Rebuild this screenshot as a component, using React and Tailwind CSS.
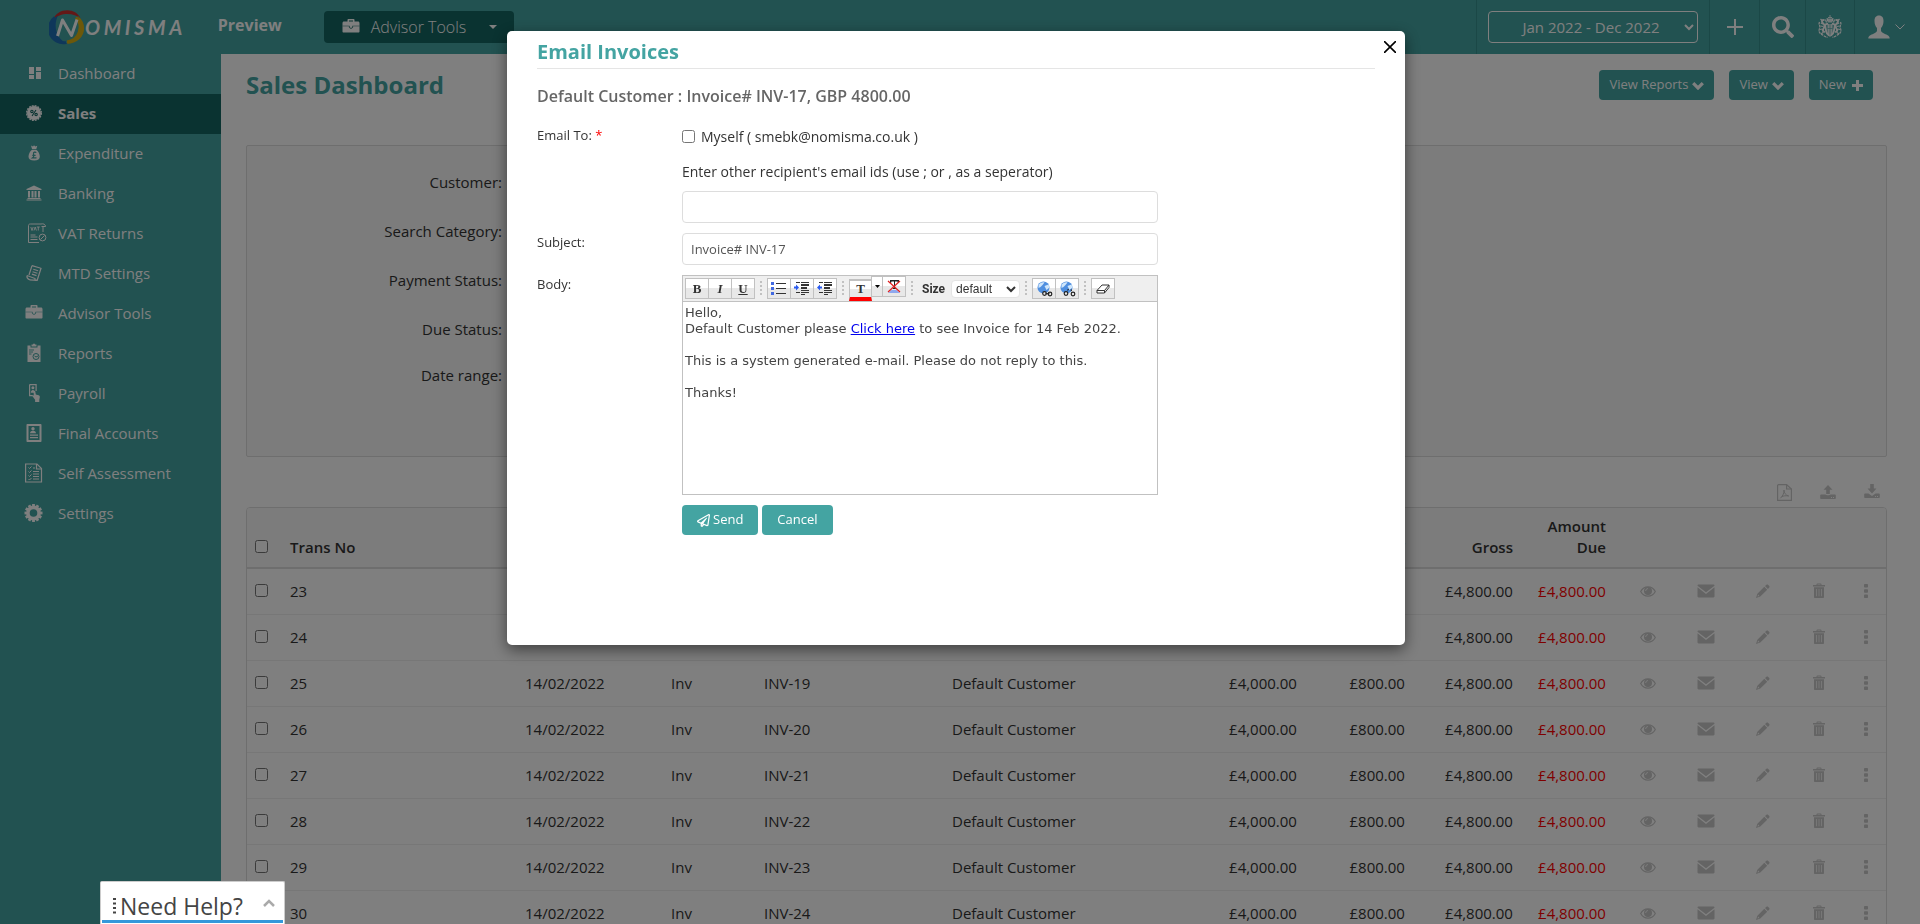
import React from "react";
import { FaSearch, FaRegPaperPlane } from "react-icons/fa";

/* ---------- icons ---------- */

const Icon = ({ box = "0 0 20 20", className = "size-5", children }) => (
  <svg viewBox={box} className={className} fill="currentColor" aria-hidden="true">
    {children}
  </svg>
);

const DashboardIcon = () => (
  <Icon>
    <path d="M5 4h5v7H5zM12 4h5v4h-5zM5 12h5v4H5zM12 9h5v7h-5z" />
  </Icon>
);

const SalesIcon = () => (
  <Icon>
    <circle cx="10" cy="10" r="7" />
    <circle cx="10" cy="10" r="7.3" fill="none" stroke="currentColor" strokeWidth="1.4" strokeDasharray="1.9 1" />
    <g fill="none" stroke="#146662" strokeWidth="1.1">
      <circle cx="7.9" cy="8.4" r="1.2" />
      <circle cx="12.1" cy="11.6" r="1.2" />
      <path d="M12 7l-4 6" />
    </g>
  </Icon>
);

const ExpenditureIcon = () => (
  <Icon>
    <path d="M7 2.5l2 1 1-1.3 1.3 1.2 2-.6L12.300 6H8z" />
    <path d="M8 6.700h4.300c2 1.500 3.500 4.300 3.500 6.800 0 2.700-1.800 4-5.600 4s-5.700-1.300-5.700-4c0-2.500 1.500-5.300 3.500-6.800z" />
    <path d="M12.200 9.800c-.8-1.300-3-.9-2.700 1.100l.3 1.600c.1 1-.3 1.700-1.200 2.300h3.900M8.300 12.300h3.300" fill="none" stroke="#44a4a2" strokeWidth="1.200" />
  </Icon>
);

const BankIcon = () => (
  <Icon>
    <path d="M10 2.500L17.500 6v1h-15V6zM4 8h2v6.500H4zM7.500 8h2v6.500h-2zM10.500 8h2v6.500h-2zM14 8h2v6.500h-2zM3.500 15h13v1h-13zM2.500 16.500h15v1h-15z" />
  </Icon>
);

const VatIcon = () => (
  <Icon box="-3 0 20 20" className="size-5 overflow-visible">
    <g fill="none" stroke="currentColor" strokeWidth="1">
      <path d="M16 9V3.500M14 1H3.500c-1.500 0-2 .6-2 1.500v17H12M14 1c2.500-.6 4.500.3 4.500 2.500h-4" />
      <circle cx="15.500" cy="14.500" r="3.400" />
      <path d="M13.500 16.500l4-4M3.500 12h5M3.500 14h7M3.500 16.500h7" />
      <path d="M3.800 4L5 7.500 6.200 4M7 7.500L8.200 4l1.200 3.500M9.800 4h3M11.300 4v3.500" strokeWidth=".9" />
    </g>
  </Icon>
);

const MtdIcon = () => (
  <Icon>
    <g fill="none" stroke="currentColor" strokeWidth="1.200">
      <path d="M8 2.600l9 2.700-3.800 12-7.600-.4" />
      <path d="M8 2.600L5 12M3 12.500l8 3c-.5 1.500.5 2.200 2 1.800M3 12.500c-.4 2 .6 3.500 3 4.300" />
      <path d="M9.300 6.300l4.800 1.500M8.600 8.700l4.800 1.500M7.900 11.100l4.600 1.500" />
    </g>
  </Icon>
);

const BriefcaseIcon = ({ className, seam = "#44a4a2" }) => (
  <Icon className={className}>
    <path
      d="M6.500 4.500V3c0-.6.400-1 1-1h5c.6 0 1 .4 1 1v1.500H17c.9 0 1.500.6 1.500 1.500v8.500c0 .6-.4 1-1 1h-15c-.6 0-1-.4-1-1V6c0-.9.600-1.500 1.500-1.500zM8 4.500h4v-1H8z"
      fillRule="evenodd"
    />
    <path d="M1.500 9h6.300M12.200 9h6.300" stroke={seam} strokeWidth=".5" />
    <path d="M8.300 8.800v1.400c0 1.500 3.400 1.500 3.400 0V8.800" fill="none" stroke={seam} strokeWidth=".8" />
  </Icon>
);

const ReportsIcon = () => (
  <Icon>
    <path d="M3.500 2.500h3v2h7v-2h3V19h-13z" />
    <path d="M7.500 1.500H9V.7h2v.8h1.500v2h-5z" />
    <path d="M5 7h5M5 9h4M5 11h2.500" stroke="#44a4a2" strokeWidth=".9" />
    <circle cx="12" cy="13.500" r="3" fill="none" stroke="#44a4a2" strokeWidth="1" />
    <path d="M10.500 13l1.500 1 2-1" fill="none" stroke="#44a4a2" strokeWidth="1" />
  </Icon>
);

const PayrollIcon = () => (
  <Icon>
    <path d="M5.600 1.600h6.500v6.500M5.600 1.600v11h3.200" fill="none" stroke="currentColor" strokeWidth="1.200" />
    <circle cx="8.900" cy="4.800" r="1.500" />
    <path d="M6.800 9.800c0-3.600 4.200-3.600 4.200 0z" />
    <path d="M9.600 8.500c0-1 1.500-1 1.700 0l.5 3 2.800.8c.9.300 1.300 1 1.200 1.900l-.5 2.500V19h-4.200v-2.200L8.500 13.300c-.4-.9.500-1.300 1.300-.6z" />
  </Icon>
);

const AccountsIcon = () => (
  <Icon>
    <path d="M3.500 1h13c.6 0 1 .4 1 1v16c0 .6-.4 1-1 1h-13c-.6 0-1-.4-1-1V2c0-.6.400-1 1-1zM4.500 3v14h11V3z" fillRule="evenodd" />
    <circle cx="9" cy="5.800" r="1.700" />
    <path d="M6 10.300c0-3.300 6-3.300 6 0zM6 11.500h8v1.200H6zM6 14h8v1.200H6z" />
  </Icon>
);

const AssessmentIcon = () => (
  <Icon>
    <g fill="none" stroke="currentColor" strokeWidth="1.200">
      <path d="M1.600 1H13l4.500 4.500V19H1.600z" />
      <path d="M12.500 1v5h5" />
      <path d="M4.500 4.500l1 1L7.500 3.500M4.500 8.500l1 1 2-2M4.500 12.500l1 1 2-2M4.500 16l1 1 2-2" strokeWidth="1" />
      <path d="M9 5h2M9 8.500h6M9 11h6M9 13.500h6M9 16h6" strokeWidth="1.100" />
    </g>
  </Icon>
);

const teeth = [0, 30, 60, 90, 120, 150, 180, 210, 240, 270, 300, 330];
const SettingsIcon = () => (
  <Icon>
    <circle cx="9.500" cy="10" r="5.600" fill="none" stroke="currentColor" strokeWidth="3.600" />
    {teeth.map((a) => (
      <rect key={a} x="8.100" y="1" width="2.800" height="2.600" transform={`rotate(${a} 9.5 10)`} />
    ))}
  </Icon>
);

const EyeIcon = () => (
  <Icon box="0 0 16 16" className="size-4">
    <path d="M.7 8.500C4 2.300 12 2.300 15.300 8.500 12 14.700 4 14.700.7 8.500z" fill="none" stroke="currentColor" strokeWidth="1.200" />
    <circle cx="8" cy="8" r="4" />
    <path d="M5.700 8c0-1.500.9-2.400 2.300-2.400" fill="none" stroke="#fff" strokeWidth=".9" />
  </Icon>
);

const MailIcon = () => (
  <Icon box="0 0 18 16" className="h-4 w-[18px]">
    <path d="M.5 2.700c0-.7.400-1.200 1.100-1.200h14.800c.7 0 1.100.5 1.100 1.200L9 9.300zM.5 4.200L9 10.900l8.500-6.700v9.100c0 .7-.4 1.200-1.100 1.200H1.600c-.7 0-1.100-.5-1.100-1.200z" />
  </Icon>
);

const PencilIcon = () => (
  <Icon box="0 0 14 14" className="size-[14px]">
    <path d="M10.200.9c.6-.6 1.400-.6 2 0l.9.900c.6.600.6 1.400 0 2l-1.200 1.200-2.900-2.900zM8.300 2.800l2.900 2.900-6.900 6.900L0 14l1.400-4.300zM2.100 10.600l-.6 1.900 1.900-.6z" fillRule="evenodd" />
  </Icon>
);

const TrashIcon = () => (
  <Icon box="0 0 14 16" className="h-4 w-[14px]">
    <path d="M4.500 2V1.300c0-.5.300-.8.800-.8h3.400c.5 0 .8.300.8.800V2H13v1.500H1V2zM5.500 2h3v-.6h-3z" fillRule="evenodd" />
    <path d="M2 4.200h10V14c0 .6-.4 1-1 1H3c-.6 0-1-.4-1-1zM4.300 6v7.300h.7V6zM6.650 6v7.300h.7V6zM9 6v7.300h.7V6z" fillRule="evenodd" />
  </Icon>
);

const DotsIcon = () => (
  <Icon box="0 0 4 14" className="h-[14px] w-1">
    <rect width="4" height="3.600" rx=".8" />
    <rect y="5.200" width="4" height="3.600" rx=".8" />
    <rect y="10.400" width="4" height="3.600" rx=".8" />
  </Icon>
);

const PdfIcon = () => (
  <Icon box="0 0 15 17" className="h-[17px] w-[15px]">
    <g fill="none" stroke="currentColor" strokeWidth="1.200">
      <path d="M1.600.600h8L14.400 5v11.400H.6V1.600c0-.6.400-1 1-1z" />
      <path d="M9.600.600V5h4.800" />
      <path d="M3.300 14.300c2-1.500 4.200-5.500 3.700-8.300 0 3 1.500 5 4.700 6-3-.5-5.200-.3-7.200.8" strokeWidth="1" />
    </g>
  </Icon>
);

const UploadIcon = () => (
  <Icon box="0 0 16 16" className="size-4">
    <path d="M8 1l4.500 4.700H9.800V10H6.200V5.700H3.500z" />
    <path d="M1 10.500h4.500c.3 1 4.700 1 5 0H15c.5 0 .8.300.8.800v3c0 .5-.3.800-.8.800H1c-.5 0-.8-.3-.8-.8v-3c0-.5.300-.8.800-.8zM11 13h1v1h-1zM13 13h1v1h-1z" fillRule="evenodd" />
  </Icon>
);

const DownloadIcon = () => (
  <Icon box="0 0 16 16" className="size-4">
    <path d="M8 9.500l4.500-5H9.800V0H6.200v4.500H3.500z" />
    <path d="M1 9.500h3.500L8 12l3.500-2.500H15c.5 0 .8.300.8.800v3c0 .5-.3.800-.8.800H1c-.5 0-.8-.3-.8-.8v-3c0-.5.300-.8.800-.8zM11 12h1v1h-1zM13 12h1v1h-1z" fillRule="evenodd" />
  </Icon>
);

const ThickChevron = () => (
  <svg viewBox="0 0 12 8" className="mt-0.5 h-2 w-3" fill="none" stroke="currentColor" strokeWidth="3.200" aria-hidden="true">
    <path d="M1.200 1.200L6 6l4.800-4.800" />
  </svg>
);

const ThickPlus = () => (
  <svg viewBox="0 0 11 11" className="size-[11px]" fill="none" stroke="currentColor" strokeWidth="3" aria-hidden="true">
    <path d="M5.500 0v11M0 5.500h11" />
  </svg>
);

const UserIcon = () => (
  <Icon box="0 0 22 24" className="h-6 w-[22px]">
    <path d="M11 .5c3.200 0 4.500 2.300 4.500 5.500 0 3-1 5.500-2.500 7v2.500c0 1.500 1.500 2.200 3.500 3.200 2.500 1.100 5.200 1.800 5.200 4.800H.3c0-3 2.700-3.700 5.200-4.800 2-1 3.500-1.700 3.500-3.200V13c-1.500-1.500-2.500-4-2.500-7C6.500 2.800 7.800.5 11 .5z" />
  </Icon>
);

const crestHalf = (
  <g fill="none" stroke="currentColor">
    <path d="M10 9c-2.500-.5-3 1-2.600 3l.8 4.500c.3 1.800 1 2.800 2.800 4" strokeWidth="1.800" />
    <path d="M6.500 5.500c-1.800-1.200-3 .2-2.300 1.800.4 1.200 2 1.300 2.300 3 .3 1.500-.6 3-1.500 4.200-.8 1.200.4 2 1.700 3" strokeWidth="2" />
    <path d="M4 5.500L2.500 4M5 9L2.800 8M5.300 11.500L2.500 11M4.300 14l-2.300.5M5 17.500l-2 1.500" strokeWidth="1.200" />
    <path d="M1.500 7c-1.300 2.500.8 3 .3 5.500-.4 1.700-1.300 3-.3 4.800 1 1.500 2.500 2.200 4 3.200 1.500 1 2.500 1.500 4 1.800" strokeWidth="1.300" strokeDasharray="2.500 .7" />
    <path d="M8.500 7.500l-1-3M9.700 6l-.6-3" strokeWidth="1.200" />
  </g>
);
const CrestIcon = () => (
  <Icon box="0 0 24 24" className="size-6">
    <path d="M11.500 0h1v2h1.500v1.500h-4V2h1.500zM9.500 4h5v3.500h-5zM9.500 9h5v9c0 2-1.200 3-2.500 4-1.300-1-2.500-2-2.500-4z" opacity=".85" />
    <path d="M12 9v11M9.500 13.500h5" stroke="#44a4a2" strokeWidth=".6" />
    {crestHalf}
    <g transform="matrix(-1 0 0 1 24 0)">{crestHalf}</g>
  </Icon>
);

const LogoRing = () => (
  <svg viewBox="0 0 36 36" className="size-9 shrink-0" aria-hidden="true" fill="none">
    <path d="M4 11C8 -1.500 27 -2 31.500 9.500 25 3.500 11 3 4 11z" fill="#c8302f" />
    <path d="M9 6.500C-3.500 14-1.500 34 19 35 8 31 3.500 18 9 6.500z" fill="#1f6fb5" />
    <path d="M6 8.500A14 14 0 0 0 17 33.500" stroke="#1f6fb5" strokeWidth="3" />
    <path d="M29 7C41 17 34.500 35 17.500 35 29 31 32.500 18 29 7z" fill="#d9b015" />
    <path d="M27 8.500A14.500 14.500 0 0 1 18 33" stroke="#d9b015" strokeWidth="3" />
    <path d="M8.500 27L13.500 11l9 15.500L28 10.500" stroke="#fff" strokeWidth="3" strokeLinejoin="round" />
  </svg>
);

/* ---------- shell ---------- */

const nav = [
  ["Dashboard", DashboardIcon],
  ["Sales", SalesIcon],
  ["Expenditure", ExpenditureIcon],
  ["Banking", BankIcon],
  ["VAT Returns", VatIcon],
  ["MTD Settings", MtdIcon],
  ["Advisor Tools", BriefcaseIcon],
  ["Reports", ReportsIcon],
  ["Payroll", PayrollIcon],
  ["Final Accounts", AccountsIcon],
  ["Self Assessment", AssessmentIcon],
  ["Settings", SettingsIcon],
];

function Header() {
  return (
    <header className="flex h-[54px] shrink-0 items-center bg-[#44a4a2] text-white">
      <a href="#home" className="ml-[49px] flex items-center" aria-label="Nomisma">
        <LogoRing />
        <span className="font-[Lato,sans-serif] text-xl font-bold tracking-[0.18em] italic">OMISMA</span>
      </a>
      <span className="ml-8 pb-1 text-base font-bold">Preview</span>
      <button type="button" className="ml-[42px] flex h-8 w-[190px] items-center rounded bg-[#146662] px-[17px] text-base font-light">
        <BriefcaseIcon className="size-5" seam="#146662" />
        <span className="ml-2.5">Advisor Tools</span>
        <svg viewBox="0 0 8 4" className="ml-auto h-1 w-2" fill="currentColor" aria-hidden="true">
          <path d="M0 0h8L4 4z" />
        </svg>
      </button>
      <div className="ml-auto flex h-full items-stretch">
        <div className="flex items-center border-l border-[#37908e] px-[11px]">
          <select aria-label="Financial year" className="h-8 w-[210px] rounded border border-white bg-transparent pl-2 text-center text-[15px]">
            <option>Jan 2022 - Dec 2022</option>
          </select>
        </div>
        <button type="button" aria-label="Add" className="flex w-[50px] items-center justify-center border-l border-[#37908e]">
          <svg viewBox="0 0 16 16" className="size-4" stroke="currentColor" strokeWidth="2" aria-hidden="true">
            <path d="M8 0v16M0 8h16" />
          </svg>
        </button>
        <button type="button" aria-label="Search" className="flex w-[46px] items-center justify-center border-l border-[#37908e]">
          <FaSearch className="size-[22px]" />
        </button>
        <button type="button" aria-label="HMRC" className="flex w-[49px] items-center justify-center border-l border-[#37908e]">
          <CrestIcon />
        </button>
        <button type="button" aria-label="Account" className="flex w-[66px] items-center gap-[5px] border-l border-[#37908e] pl-[13px]">
          <UserIcon />
          <svg viewBox="0 0 10 6" className="h-1.5 w-2.5" fill="none" stroke="currentColor" aria-hidden="true">
            <path d="M.5.500L5 5 9.500.5" />
          </svg>
        </button>
      </div>
    </header>
  );
}

function Sidebar() {
  return (
    <nav className="w-[221px] shrink-0 bg-[#44a4a2] text-white">
      <ul>
        {nav.map(([label, Glyph]) => (
          <li key={label}>
            <a
              href={"#" + label.toLowerCase().replace(" ", "-")}
              className={
                label === "Sales"
                  ? "flex h-10 items-center gap-[14px] bg-[#146662] pb-0.5 pl-6 text-[15px] font-bold"
                  : "flex h-10 items-center gap-[14px] pb-0.5 pl-6 text-[15px]"
              }
            >
              <Glyph />
              {label}
            </a>
          </li>
        ))}
      </ul>
    </nav>
  );
}

const filters = ["Customer:", "Search Category:", "Payment Status:", "Due Status:", "Date range:"];
const rows = [23, 24, 25, 26, 27, 28, 29, 30].map((no) => ({ no, inv: "INV-" + (no - 6) }));
const actions = [
  ["View", EyeIcon],
  ["Email", MailIcon],
  ["Edit", PencilIcon],
  ["Delete", TrashIcon],
  ["More", DotsIcon],
];

function TransactionTable() {
  return (
    <div className="overflow-hidden rounded-t border border-[#ddd]">
      <table className="w-full table-fixed text-[15px] [&_td]:px-2 [&_th]:px-2">
        <colgroup>
          <col className="w-[35px]" />
          <col className="w-[235px]" />
          <col className="w-[146px]" />
          <col className="w-[93px]" />
          <col className="w-[188px]" />
          <col />
          <col className="w-[116px]" />
          <col className="w-[108px]" />
          <col className="w-[108px]" />
          <col className="w-[93px]" />
          <col className="w-[68px]" />
          <col className="w-[48px]" />
          <col className="w-[66px]" />
          <col className="w-[46px]" />
          <col className="w-[44px]" />
        </colgroup>
        <thead>
          <tr className="h-[60px] border-b-2 border-[#ddd] bg-[#f8f8f8] text-left align-bottom leading-[21px] [&>th]:pb-[9px] [&>th]:font-semibold">
            <th>
              <input type="checkbox" aria-label="Select all" className="m-0 mb-[5px] block size-[13px]" />
            </th>
            <th>Trans No</th>
            <th>Date</th>
            <th>Type</th>
            <th>Invoice No</th>
            <th>Customer</th>
            <th className="text-right">Net</th>
            <th className="text-right">VAT</th>
            <th className="text-right">Gross</th>
            <th className="text-right">Amount Due</th>
            <td colSpan={5} />
          </tr>
        </thead>
        <tbody>
          {rows.map((r) => (
            <tr key={r.no} className="h-[46px] border-b border-[#eee]">
              <td>
                <input type="checkbox" aria-label={"Select " + r.no} className="m-0 mb-0.5 block size-[13px]" />
              </td>
              <td>{r.no}</td>
              <td>14/02/2022</td>
              <td>Inv</td>
              <td>{r.inv}</td>
              <td>Default Customer</td>
              <td className="text-right">£4,000.00</td>
              <td className="text-right">£800.00</td>
              <td className="text-right">£4,800.00</td>
              <td className="text-right text-[#f00]">£4,800.00</td>
              {actions.map(([name, Glyph]) => (
                <td key={name} className="last:pl-3">
                  <button type="button" aria-label={name} className="mx-auto flex text-[#c8c8c8]">
                    <Glyph />
                  </button>
                </td>
              ))}
            </tr>
          ))}
        </tbody>
      </table>
    </div>
  );
}

const actionButton = "flex h-[30px] items-center rounded bg-[#44a4a2] px-2.5 text-[13px] text-white";

function Dashboard() {
  return (
    <main className="min-w-0 flex-1 bg-white px-[25px] pr-[33px]">
      <div className="flex h-[91px] items-start justify-between pt-4">
        <h1 className="text-2xl leading-[30px] font-bold text-[#44a4a2]">Sales Dashboard</h1>
        <div className="mr-[14px] flex gap-[15px]">
          <button type="button" className={actionButton + " gap-1"}>
            View Reports <ThickChevron />
          </button>
          <button type="button" className={actionButton + " gap-1"}>
            View <ThickChevron />
          </button>
          <button type="button" className={actionButton + " gap-1.5"}>
            New <ThickPlus />
          </button>
        </div>
      </div>
      <section className="h-[312px] rounded-xs border border-[#ddd] bg-[#f8f8f8] pt-3">
        {filters.map((label) => (
          <div key={label} className="flex h-[49px] w-[255px] items-center justify-end last:h-[42px]">
            <span className="text-[15px]">{label}</span>
          </div>
        ))}
      </section>
      <div className="flex h-[50px] items-center justify-end gap-7 pt-5 pr-[7px] text-[#c8c8c8]">
        <button type="button" aria-label="Export PDF"><PdfIcon /></button>
        <button type="button" aria-label="Upload"><UploadIcon /></button>
        <button type="button" aria-label="Download"><DownloadIcon /></button>
      </div>
      <TransactionTable />
    </main>
  );
}

/* ---------- editor ---------- */

const Tool = ({ label, children, className = "w-6" }) => (
  <button
    type="button"
    aria-label={label}
    className={"-ml-px flex h-[21px] items-center justify-center border border-[#c1c1c1] bg-linear-to-b from-white from-50% to-[#e8e8e8] to-50% text-[#333] first:ml-0 " + className}
  >
    {children}
  </button>
);

const Group = ({ children }) => <div className="flex">{children}</div>;

const Grip = () => (
  <svg viewBox="0 0 2 15" className="mx-[5px] h-[15px] w-0.5 shrink-0" fill="#c1c1c1" aria-hidden="true">
    <path d="M0 0h2v2H0zM0 4h2v2H0zM0 8h2v2H0zM0 12h2v2H0z" />
  </svg>
);

const ListGlyph = () => (
  <svg viewBox="0 0 16 15" className="h-[15px] w-4" aria-hidden="true">
    <path d="M0 1h3v3H0zM0 6h3v3H0zM0 11h3v3H0z" fill="#4169e1" />
    <path d="M5 2h10v1H5zM5 7h10v1H5zM5 12h10v1H5z" fill="#333" />
  </svg>
);

const IndentGlyph = ({ out }) => (
  <svg viewBox="0 0 16 15" className="h-[15px] w-4" aria-hidden="true">
    <path d="M2 1h4v1H2zM7 1h8v1H7zM7 3h8v2H7zM7 6h6v2H7zM7 9h8v1H7zM2 11h4v1H2zM7 11h8v1H7zM7 13h4v1H7z" fill="#333" />
    {out ? <path d="M0 6.500l3-3v2h2v2H3v2z" fill="#2a5bf0" /> : <path d="M5 6.500l-3-3v2H0v2h2v2z" fill="#2a5bf0" />}
  </svg>
);

const GlobeGlyph = ({ broken }) => (
  <svg viewBox="0 0 17 16" className="h-4 w-[17px]" aria-hidden="true">
    <circle cx="7.500" cy="6.500" r="6" fill="#4f8fe0" />
    <path d="M2.500 4c2-3 5-3 6-2.500L6.500 4l-2 2-2 1zM8.500 5l4-1.500 1 3-3 2.500z" fill="#cfe6fb" />
    <g fill="#e8e8e8" stroke="#222" strokeWidth="1.200">
      <circle cx={broken ? 7 : 8.500} cy="12.500" r="1.800" />
      <circle cx="14" cy="13" r="1.800" />
      {broken ? <path d="M8.500 9.500l1-1.500M12.500 10l-.5-1.500" /> : <path d="M9.500 12.700h4" />}
    </g>
  </svg>
);

const EraserGlyph = () => (
  <svg viewBox="0 0 14 12" className="h-3 w-[14px]" fill="#fff" stroke="#333" strokeLinejoin="round" aria-hidden="true">
    <path d="M1 7.500L6 2h7L8.500 7.500zM1 7.500V10h7.500V7.500M8.500 10L13 4.500V2" />
  </svg>
);

const ClearColourGlyph = () => (
  <svg viewBox="0 0 14 15" className="h-[15px] w-[14px]" aria-hidden="true">
    <path d="M1 14l3.500-3h5l3.500 3z" fill="#8fa8ee" />
    <path d="M3 1h9v3h-1l-.5-1.500H8V9h1v1H6V9h1V2.500H4.500L4 4H3z" fill="#222" />
    <path d="M1 2l12 11M13 2L1 13" stroke="#e02020" strokeWidth="1.200" />
  </svg>
);

function Editor() {
  return (
    <div className="h-[220px] w-[476px] border border-[#c1c1c1] bg-white">
      <div className="flex h-[26px] items-center border-b border-[#c1c1c1] bg-[#efefef] px-0.5">
        <Group>
          <Tool label="Bold"><b className="font-['Liberation_Serif',serif] text-[13px]">B</b></Tool>
          <Tool label="Italic"><i className="font-['Liberation_Serif',serif] text-[13px] font-bold">I</i></Tool>
          <Tool label="Underline"><u className="font-['Liberation_Serif',serif] text-[13px] font-bold">U</u></Tool>
        </Group>
        <Grip />
        <Group>
          <Tool label="Bulleted list"><ListGlyph /></Tool>
          <Tool label="Indent"><IndentGlyph /></Tool>
          <Tool label="Outdent"><IndentGlyph out /></Tool>
        </Group>
        <Grip />
        <Group>
          <button
            type="button"
            aria-label="Text colour"
            className="mt-[3px] flex h-[22px] w-[23px] items-center justify-center border-x border-t-2 border-b-4 border-x-[#c1c1c1] border-t-[#c1c1c1] border-b-[#f00] bg-linear-to-b from-white from-50% to-[#e8e8e8] to-50% font-['Liberation_Serif',serif] text-[13px] font-bold text-[#333]"
          >
            T
          </button>
          <Tool label="Pick colour" className="w-3">
            <svg viewBox="0 0 5 3" className="h-[3px] w-[5px]" aria-hidden="true"><path d="M0 0h5L2.500 3z" /></svg>
          </Tool>
          <Tool label="Clear colour"><ClearColourGlyph /></Tool>
        </Group>
        <Grip />
        <label className="ml-1 flex items-center gap-1.5 font-['Roboto',sans-serif] text-xs font-bold text-[#333]">
          Size
          <select className="h-[18px] w-[69px] rounded border border-[#e4e4e4] bg-white font-['Liberation_Sans',sans-serif] text-xs font-normal">
            <option>default</option>
          </select>
        </label>
        <Grip />
        <Group>
          <Tool label="Insert link"><GlobeGlyph /></Tool>
          <Tool label="Remove link"><GlobeGlyph broken /></Tool>
        </Group>
        <Grip />
        <Group>
          <Tool label="Remove formatting"><EraserGlyph /></Tool>
        </Group>
      </div>
      <div className="px-0.5 pt-[3px] font-['DejaVu_Sans',sans-serif] text-[13px] leading-4 text-[#444]">
        <p>Hello,</p>
        <p>
          Default Customer please <a href="#invoice" className="text-[#00e] underline">Click here</a> to see Invoice for 14 Feb 2022.
        </p>
        <br />
        <p>This is a system generated e-mail. Please do not reply to this.</p>
        <br />
        <p>Thanks!</p>
      </div>
    </div>
  );
}

const field = "h-8 w-[476px] rounded border border-[#ddd] bg-white px-2 text-[13px] text-[#555]";

function EmailDialog() {
  return (
    <div
      role="dialog"
      aria-label="Email Invoices"
      className="relative h-[614px] w-[898px] rounded-[5px] bg-white px-[30px] shadow-[0_5px_15px_rgba(0,0,0,0.5)]"
    >
      <button type="button" aria-label="Close" className="absolute top-[9px] right-2 flex size-[14px] items-center justify-center">
        <svg viewBox="0 0 12 12" className="size-3" stroke="#000" strokeWidth="1.600" aria-hidden="true">
          <path d="M0 0l12 12M12 0L0 12" />
        </svg>
      </button>
      <h2 className="h-[38px] border-b border-[#e5e5e5] pt-[7px] text-xl leading-7 font-bold text-[#44a4a2]">Email Invoices</h2>
      <h3 className="pt-[15px] text-base leading-6 font-semibold text-[#666]">Default Customer : Invoice# INV-17, GBP 4800.00</h3>
      <form className="grid grid-cols-[145px_1fr] text-[13px]">
        <span className="pt-[18px]">
          Email To: <span className="text-[#f00]">*</span>
        </span>
        <div className="pt-[19px]">
          <label className="flex h-5 items-center gap-1.5 text-sm">
            <input type="checkbox" className="m-0 mb-0.5 size-[13px]" />
            Myself ( smebk@nomisma.co.uk )
          </label>
          <label htmlFor="recipients" className="mt-[15px] block text-sm leading-5">
            Enter other recipient's email ids (use ; or , as a seperator)
          </label>
          <input id="recipients" type="text" className={field + " mt-[9px] block"} />
        </div>
        <label htmlFor="subject" className="pt-2.5">Subject:</label>
        <input id="subject" type="text" defaultValue="Invoice# INV-17" className={field + " mt-2.5"} />
        <span className="pt-2.5">Body:</span>
        <div className="pt-2.5">
          <Editor />
          <div className="mt-2.5 flex gap-1">
            <button type="button" className="flex h-[30px] items-center gap-[3px] rounded bg-[#44a4a2] px-[15px] text-[13px] text-white">
              <FaRegPaperPlane className="size-[13px]" /> Send
            </button>
            <button type="button" className="h-[30px] rounded bg-[#44a4a2] px-[15px] text-[13px] text-white">Cancel</button>
          </div>
        </div>
      </form>
    </div>
  );
}

export default function App() {
  return (
    <div className="flex h-screen flex-col overflow-hidden font-['Open_Sans',sans-serif] text-[#333]">
      <Header />
      <div className="flex min-h-0 flex-1">
        <Sidebar />
        <Dashboard />
      </div>
      <div className="fixed inset-0 flex items-start justify-center bg-black/50 pt-[31px] pr-2">
        <EmailDialog />
      </div>
      <button
        type="button"
        className="fixed bottom-0 left-[100px] flex h-[43px] w-[185px] flex-col rounded-t-xs border border-b-0 border-[#ccc] bg-white px-px text-[#444]"
      >
        <span className="flex h-[38px] w-full items-center pt-2.5 pr-2 pl-[11px] text-[23px] leading-7">
          <svg viewBox="0 0 3 16" className="mr-1 h-4 w-[3px]" fill="currentColor" aria-hidden="true">
            <path d="M0 0h3v2H0zM0 4.500h3v2H0zM0 9h3v2H0zM0 13.500h3v2H0z" />
          </svg>
          Need Help?
          <svg viewBox="0 0 12 8" className="mb-1.5 ml-auto h-2 w-3" fill="none" stroke="#aaa" strokeWidth="2.500" aria-hidden="true">
            <path d="M1 7l5-5 5 5" />
          </svg>
        </span>
        <span className="block h-[3px] w-full bg-[#3498db]" />
      </button>
    </div>
  );
}
